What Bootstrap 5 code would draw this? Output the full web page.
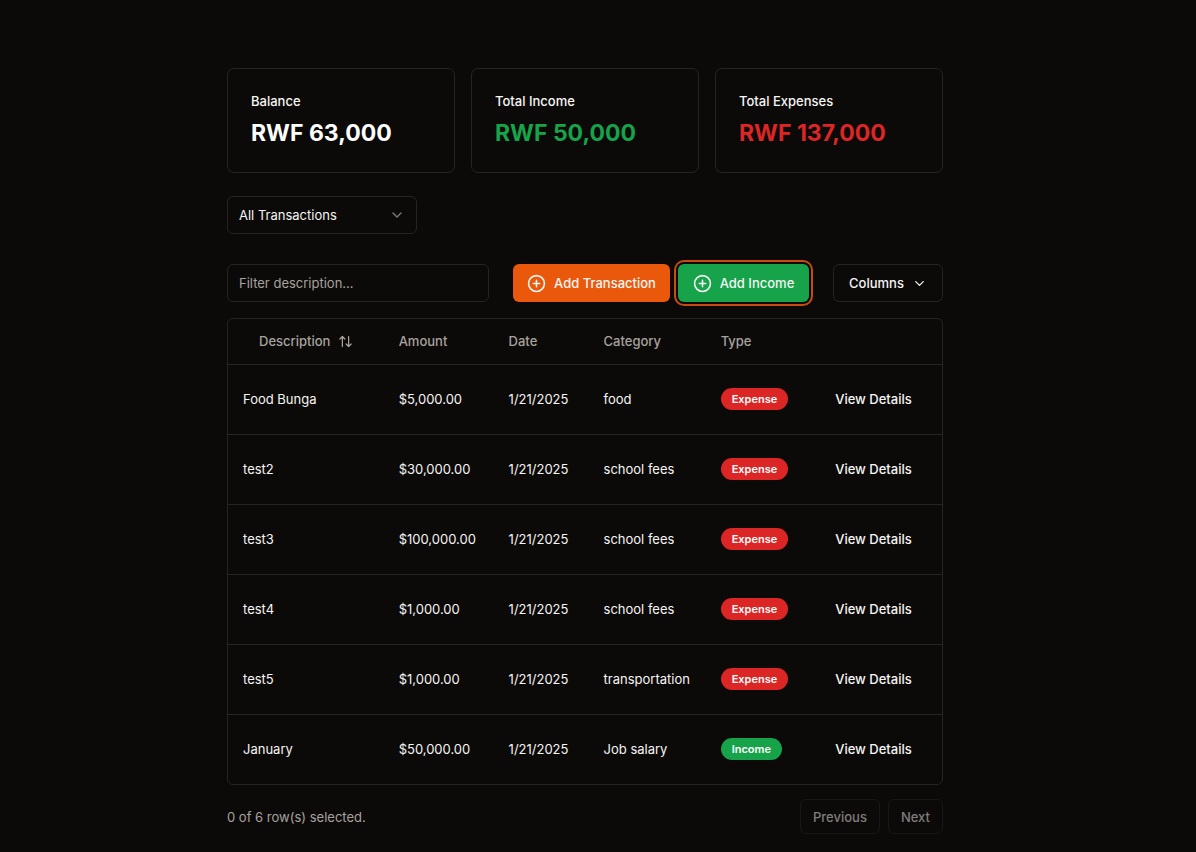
<!DOCTYPE html>
<html lang="en" data-bs-theme="dark">
<head>
<meta charset="utf-8">
<meta name="viewport" content="width=device-width, initial-scale=1">
<title>Transactions</title>
<link href="https://cdn.jsdelivr.net/npm/bootstrap@5.3.0/dist/css/bootstrap.min.css" rel="stylesheet">
<style>
  :root { --page: #0c0a09; --line: #262422; --ink: #f5f5f4; --dim: #a8a29e; --orange: #ea580c; --green: #16a34a; --red: #dc2626; }
  body { background: var(--page); color: var(--ink); font-family: Inter, "Liberation Sans", sans-serif; font-size: 13px; line-height: 20px; }
  .page { padding: 68px 26px 16px 0; }
  .board { max-width: 716px; }
  .panel { background: transparent; border-color: var(--line); border-radius: 7px; min-height: 105px; padding: 22px 23px; }
  .panel-label { font-weight: 500; }
  .amount { color: #fff; font-size: 23px; line-height: 30px; font-weight: 700; margin-top: 7px; }
  .amount-in { color: var(--green); }
  .amount-out { color: var(--red); }
  .field, .field:focus { background-color: transparent; border: 1px solid var(--line); border-radius: 6px; color: var(--ink); font-size: 13px; line-height: 20px; height: 38px; padding: 8px 11px; box-shadow: none; }
  .field::placeholder { color: var(--dim); opacity: 1; }
  .field option { background: var(--page); }
  .picker { width: 190px; margin-top: 23px; background-image: url("data:image/svg+xml,%3Csvg xmlns='http://www.w3.org/2000/svg' viewBox='0 0 24 24' fill='none' stroke='%237d7a77' stroke-width='2' stroke-linecap='round' stroke-linejoin='round'%3E%3Cpath d='m6 9 6 6 6-6'/%3E%3C/svg%3E"); background-size: 16px; background-position: right 11px center; }
  .toolbar { margin-top: 30px; }
  .search { flex: 0 1 262px; }
  .action { --bs-btn-font-size: 13px; --bs-btn-line-height: 20px; --bs-btn-font-weight: 500; --bs-btn-color: var(--ink); --bs-btn-border-radius: 6px; --bs-btn-border-color: transparent; --bs-btn-padding-x: 15px; --bs-btn-padding-y: 8px; height: 38px; white-space: nowrap; display: inline-flex; align-items: center; justify-content: center; }
  .action-orange { --bs-btn-bg: var(--orange); --bs-btn-hover-bg: #c94c0a; border: 0; width: 157px; }
  .action-green { --bs-btn-bg: var(--green); --bs-btn-hover-bg: #128a3e; border: 0; width: 131px; }
  .ringed { box-shadow: 0 0 0 2px var(--page), 0 0 0 4px #c94c0c; }
  .action-line { --bs-btn-border-color: var(--line); --bs-btn-hover-border-color: var(--dim); }
  .columns { width: 110px; }
  .pager { height: 35px; --bs-btn-padding-x: 12px; --bs-btn-padding-y: 6px; --bs-btn-disabled-color: #807d7b; --bs-btn-disabled-border-color: #191716; --bs-btn-disabled-opacity: 1; }
  .sheet { border: 1px solid var(--line); border-radius: 6px; }
  .sheet .table { --bs-table-bg: transparent; --bs-table-color: var(--ink); --bs-table-border-color: var(--line); table-layout: fixed; min-width: 714px; }
  .sheet th, .sheet td { padding: 0 15px; vertical-align: middle; }
  .sheet th { height: 45px; color: var(--dim); font-weight: 500; }
  .sheet td { height: 70px; }
  .sheet tbody tr:last-child td { border-bottom: 0; }
  .sort { --bs-btn-color: var(--dim); }
  .pill { font-size: 11px; line-height: 14px; font-weight: 600; padding: 4px 11px; border-radius: 11px; vertical-align: middle; }
  .pill-red { background: var(--red); }
  .pill-green { background: var(--green); }
  .dim { color: var(--dim); }
  .foot { margin-top: 14px; }
  svg { fill: none; stroke: currentColor; stroke-linecap: round; stroke-linejoin: round; flex: none; }
</style>
</head>
<body>
<main class="page">
  <div class="board mx-auto">
    <section class="row g-3">
      <div class="col-4"><div class="card panel"><div class="panel-label">Balance</div><div class="amount">RWF 63,000</div></div></div>
      <div class="col-4"><div class="card panel"><div class="panel-label">Total Income</div><div class="amount amount-in">RWF 50,000</div></div></div>
      <div class="col-4"><div class="card panel"><div class="panel-label">Total Expenses</div><div class="amount amount-out">RWF 137,000</div></div></div>
    </section>

    <select class="form-select field picker" aria-label="Transaction type">
      <option>All Transactions</option><option>Income</option><option>Expense</option>
    </select>

    <div class="toolbar d-flex align-items-center gap-4">
      <input type="text" class="form-control field search" placeholder="Filter description..." aria-label="Filter description">
      <div class="d-flex gap-2">
        <button type="button" class="btn action action-orange gap-2"><svg width="19" height="19" viewBox="0 0 24 24" stroke-width="2"><circle cx="12" cy="12" r="10"/><path d="M8 12h8M12 8v8"/></svg>Add Transaction</button>
        <button type="button" class="btn action action-green ringed gap-2"><svg width="19" height="19" viewBox="0 0 24 24" stroke-width="2"><circle cx="12" cy="12" r="10"/><path d="M8 12h8M12 8v8"/></svg>Add Income</button>
      </div>
      <button type="button" class="btn action action-line columns gap-2 ms-auto">Columns<svg width="15" height="15" viewBox="0 0 24 24" stroke-width="2"><path d="m6 9 6 6 6-6"/></svg></button>
    </div>

    <div class="sheet table-responsive mt-3">
      <table class="table mb-0">
        <colgroup><col style="width:21.8%"><col style="width:15.4%"><col style="width:13.3%"><col style="width:16.4%"><col style="width:13.8%"><col style="width:19.3%"></colgroup>
        <thead>
          <tr>
            <th scope="col"><button type="button" class="btn action sort gap-2">Description<svg width="15" height="15" viewBox="0 0 24 24" stroke-width="2"><path d="m3 8 4-4 4 4M7 4v16M21 16l-4 4-4-4M17 20V4"/></svg></button></th>
            <th scope="col">Amount</th><th scope="col">Date</th><th scope="col">Category</th><th scope="col">Type</th><th scope="col" aria-label="Actions"></th>
          </tr>
        </thead>
        <tbody>
          <tr><td>Food Bunga</td><td>$5,000.00</td><td>1/21/2025</td><td>food</td><td><span class="badge pill pill-red">Expense</span></td><td><button type="button" class="btn action">View Details</button></td></tr>
          <tr><td>test2</td><td>$30,000.00</td><td>1/21/2025</td><td>school fees</td><td><span class="badge pill pill-red">Expense</span></td><td><button type="button" class="btn action">View Details</button></td></tr>
          <tr><td>test3</td><td>$100,000.00</td><td>1/21/2025</td><td>school fees</td><td><span class="badge pill pill-red">Expense</span></td><td><button type="button" class="btn action">View Details</button></td></tr>
          <tr><td>test4</td><td>$1,000.00</td><td>1/21/2025</td><td>school fees</td><td><span class="badge pill pill-red">Expense</span></td><td><button type="button" class="btn action">View Details</button></td></tr>
          <tr><td>test5</td><td>$1,000.00</td><td>1/21/2025</td><td>transportation</td><td><span class="badge pill pill-red">Expense</span></td><td><button type="button" class="btn action">View Details</button></td></tr>
          <tr><td>January</td><td>$50,000.00</td><td>1/21/2025</td><td>Job salary</td><td><span class="badge pill pill-green">Income</span></td><td><button type="button" class="btn action">View Details</button></td></tr>
        </tbody>
      </table>
    </div>

    <div class="foot d-flex align-items-center gap-2">
      <div class="dim flex-grow-1">0 of 6 row(s) selected.</div>
      <button type="button" class="btn action action-line pager" disabled>Previous</button>
      <button type="button" class="btn action action-line pager" disabled>Next</button>
    </div>
  </div>
</main>
<script src="https://cdn.jsdelivr.net/npm/bootstrap@5.3.0/dist/js/bootstrap.bundle.min.js"></script>
</body>
</html>
